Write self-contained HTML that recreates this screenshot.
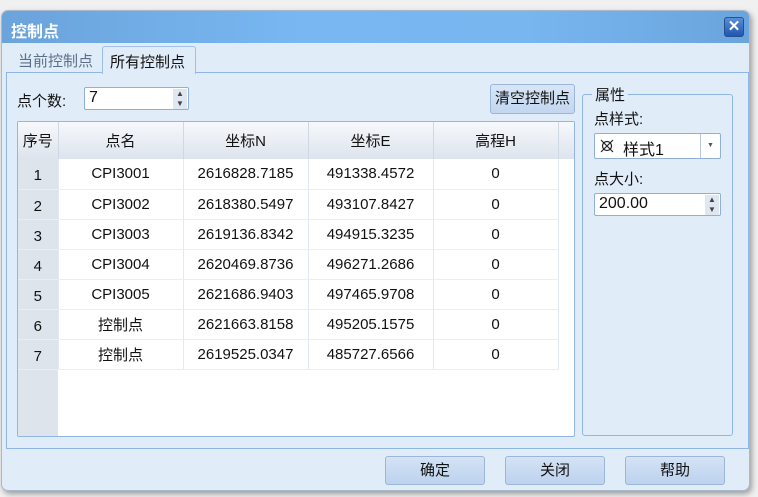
<!DOCTYPE html><html><head><meta charset="utf-8"><style>
*{box-sizing:border-box;margin:0;padding:0}
body{width:758px;height:497px;background:#f0f0f0;position:relative;overflow:hidden;font-family:"Liberation Sans","Noto Sans CJK SC",sans-serif;font-size:15px;color:#111}
.win{position:absolute;left:1px;top:10px;width:749px;height:481px;background:#e1ecf9;border-radius:7px;border:1px solid #a9b9cc;overflow:hidden;box-shadow:2px 3px 6px rgba(0,0,0,.35)}
.title{height:32px;background:linear-gradient(90deg,#6ba3db,#78b7f2 40%,#78b6f0 70%,#6aa4dc);color:#fff;font-size:16px;font-weight:bold;padding:7px 9px}
.x{position:absolute;right:5px;top:6px;width:20px;height:20px;background:linear-gradient(#5a8ed8,#1f56b0);border-radius:3px;border:1px solid #27508f;color:#fff;font-size:15px;font-weight:bold;text-align:center;line-height:17px}
.a{position:absolute}
.tab{position:absolute;top:35px;height:27px;padding:4px 7px;font-size:15px}
.panel{position:absolute;left:4px;top:61px;width:743px;height:377px;border:1px solid #8fb6e6}
table{border-collapse:collapse;position:absolute;left:18px;top:122px;background:#fff;table-layout:fixed}
td{height:30px;text-align:center;border-right:1px solid #e2e9f2;border-bottom:1px solid #e8eef5;font-size:15px}
th{height:37px;font-weight:normal;background:linear-gradient(#f6f8fb,#dde4ee);border-right:1px solid #cfd9e6;font-size:15px}
td.i{background:#dde4ec;padding-top:4px}
.btn{position:absolute;width:100px;height:29px;border:1px solid #9bb6d9;border-radius:3px;background:linear-gradient(#d4e3f5,#bcd2ee);text-align:center;line-height:27px}
.inp{position:absolute;background:#fff;border:1px solid #8fb0d8;border-radius:2px;height:23px;padding:1px 4px;font-size:16px}
.sp{position:absolute;right:1px;width:14px;height:10px;background:#dfe7f2;font-size:8px;line-height:10px;text-align:center;color:#444}
</style></head><body>
<div class="win">
<div class="title">控制点</div><div class="x">✕</div>
<div class="tab" style="left:9px;color:#5c6f8a">当前控制点</div>
<div class="tab" style="left:100px;width:94px;border:1px solid #9fc0e8;border-bottom:none;background:#e1ecf9;border-radius:3px 3px 0 0;z-index:2;height:28px">所有控制点</div>
<div class="panel"></div>
</div>
<div class="a" style="left:17px;top:90px">点个数:</div>
<div class="inp" style="left:84px;top:87px;width:105px">7<div class="sp" style="top:1px">▲</div><div class="sp" style="top:11px">▼</div></div>
<div class="a" style="left:490px;top:84px;width:85px;height:30px;border:1px solid #9bb6d9;border-radius:3px;background:linear-gradient(#d8e6f7,#c2d6ef);text-align:center;line-height:28px">清空控制点</div>
<div class="a" style="left:17px;top:121px;width:558px;height:316px;background:#fff;border:1px solid #8fb6e6;border-radius:2px;overflow:hidden">
<div class="a" style="left:0;top:0;width:40px;height:314px;background:#dde4ec"></div>
<table style="left:0;top:0;width:556px">
<colgroup><col style="width:40px"><col style="width:125px"><col style="width:125px"><col style="width:125px"><col style="width:125px"><col style="width:16px"></colgroup>
<tr><th>序号</th><th>点名</th><th>坐标N</th><th>坐标E</th><th>高程H</th><th style="border-right:none"></th></tr>
<tr><td class="i">1</td><td>CPI3001</td><td>2616828.7185</td><td>491338.4572</td><td>0</td><td style="border:none"></td></tr>
<tr><td class="i">2</td><td>CPI3002</td><td>2618380.5497</td><td>493107.8427</td><td>0</td><td style="border:none"></td></tr>
<tr><td class="i">3</td><td>CPI3003</td><td>2619136.8342</td><td>494915.3235</td><td>0</td><td style="border:none"></td></tr>
<tr><td class="i">4</td><td>CPI3004</td><td>2620469.8736</td><td>496271.2686</td><td>0</td><td style="border:none"></td></tr>
<tr><td class="i">5</td><td>CPI3005</td><td>2621686.9403</td><td>497465.9708</td><td>0</td><td style="border:none"></td></tr>
<tr><td class="i">6</td><td>控制点</td><td>2621663.8158</td><td>495205.1575</td><td>0</td><td style="border:none"></td></tr>
<tr><td class="i">7</td><td>控制点</td><td>2619525.0347</td><td>485727.6566</td><td>0</td><td style="border:none"></td></tr>
</table></div>
<div class="a" style="left:582px;top:94px;width:151px;height:342px;border:1px solid #8fb6e6;border-radius:3px"></div>
<div class="a" style="left:592px;top:84px;background:#e1ecf9;padding:0 3px">属性</div>
<div class="a" style="left:594px;top:108px">点样式:</div>
<div class="inp" style="left:594px;top:133px;width:127px;height:26px;padding:2px 5px 0 28px">样式1
<svg class="a" style="left:5px;top:5px" width="14" height="14" viewBox="0 0 14 14" fill="none" stroke="#222" stroke-width="1.2"><circle cx="7" cy="7" r="4.5"/><path d="M1 1L13 13M13 1L1 13"/></svg>
<span style="position:absolute;left:105px;top:0;height:24px;border-left:1px solid #b9c8dc;width:20px;font-size:7px;text-align:center;line-height:24px;color:#555">▼</span></div>
<div class="a" style="left:594px;top:168px">点大小:</div>
<div class="inp" style="left:594px;top:193px;width:127px">200.00<div class="sp" style="top:1px">▲</div><div class="sp" style="top:11px">▼</div></div>
<div class="btn" style="left:385px;top:456px">确定</div>
<div class="btn" style="left:505px;top:456px">关闭</div>
<div class="btn" style="left:625px;top:456px">帮助</div>
</body></html>
